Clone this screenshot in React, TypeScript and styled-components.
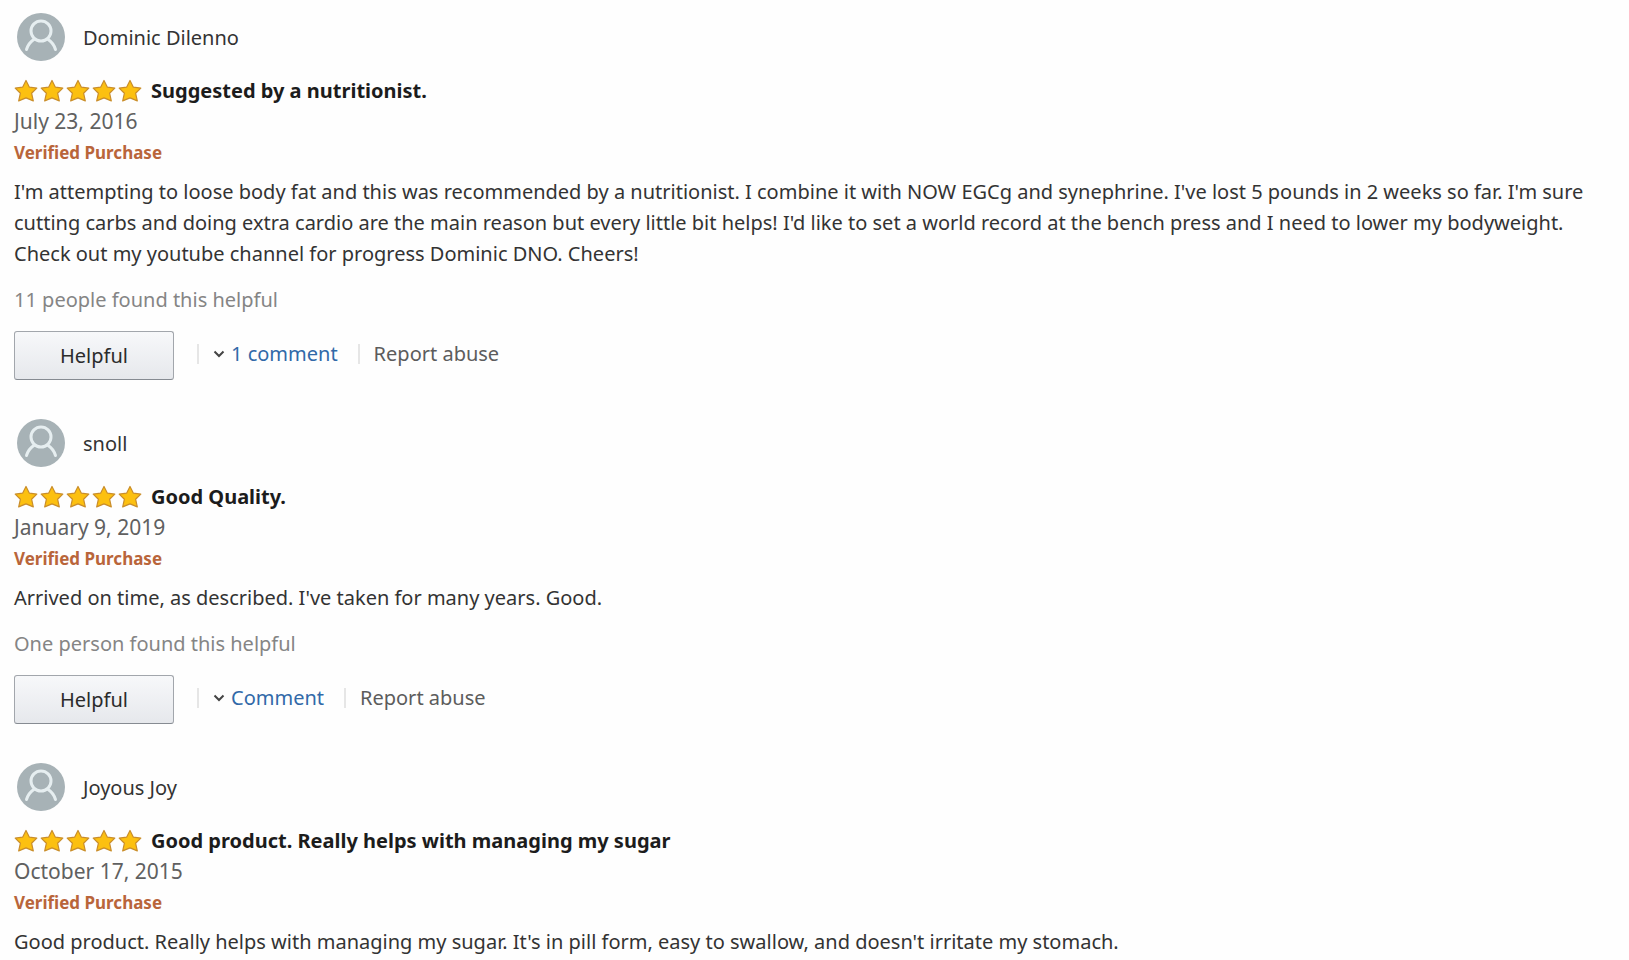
import React from 'react';
import styled, { createGlobalStyle } from 'styled-components';

const GlobalStyle = createGlobalStyle`
  * { box-sizing: border-box; }
  body {
    margin: 0;
    background: #fefefe;
    color: #333;
    font: 20px/31px "Noto Sans", "Open Sans", sans-serif;
  }
`;

const ReviewList = styled.main`
  display: flex;
  flex-direction: column;
  gap: 39px;
  padding: 13px 14px 0;
`;

const ReviewCard = styled.article`
  display: flex;
  flex-direction: column;
`;

const Profile = styled.header`
  display: flex;
  align-items: center;
  gap: 18px;
  padding-left: 3px;
  margin-bottom: 14px;
`;

const AvatarIcon = styled.svg`
  width: 48px;
  height: 48px;
  flex: none;
`;

const Name = styled.span`
  color: #333;
`;

const TitleRow = styled.div`
  display: flex;
  align-items: center;
  gap: 9px;
`;

const Rating = styled.span`
  display: flex;
  gap: 2px;
`;

const StarIcon = styled.svg`
  width: 24px;
  height: 24px;
`;

const Title = styled.h2`
  margin: 0;
  color: #1c1c1c;
  font-size: 20px;
  font-weight: 700;
`;

const ReviewDate = styled.time`
  color: #606060;
  font-size: 21px;
`;

const Verified = styled.span`
  color: #b9653a;
  font-size: 17px;
  font-weight: 700;
`;

const Body = styled.p`
  margin: 8px 0 15px;
`;

const HelpfulCount = styled.span`
  color: #858585;
  margin-bottom: 16px;
`;

const Actions = styled.footer`
  display: flex;
  align-items: center;
`;

const HelpfulButton = styled.button`
  width: 160px;
  height: 49px;
  padding: 0;
  border: 1px solid #a2a6ac;
  border-bottom-color: #868b92;
  border-radius: 3px;
  background: linear-gradient(#f7f8fa, #e6e8ec);
  color: #2b2b2b;
  font: inherit;
  cursor: pointer;
`;

const ActionLinks = styled.div`
  display: flex;
  align-items: center;
  padding-bottom: 4px;
`;

const Divider = styled.span<{ $before: number; $after: number }>`
  width: 2px;
  height: 20px;
  margin: 0 ${p => p.$after}px 0 ${p => p.$before}px;
  background: #e6e6e6;
`;

const CommentLink = styled.a`
  display: flex;
  align-items: center;
  gap: 6px;
  color: #3169a8;
  text-decoration: none;
`;

const ChevronIcon = styled.svg`
  width: 12px;
  height: 8px;
`;

const ReportLink = styled.a`
  color: #5c5c5c;
  text-decoration: none;
`;

function Avatar() {
  return (
    <AvatarIcon viewBox="0 0 48 48" aria-hidden="true">
      <circle cx="24" cy="24" r="24" fill="#a7b2b6" />
      <g fill="none" stroke="#e6eef0" strokeWidth="3" strokeLinecap="round">
        <circle cx="24" cy="18" r="10" />
        <path d="M9.500 36.500c1.500-5 4-8 8-10.500M38.500 36.500c-1.500-5-4-8-8-10.500" />
      </g>
    </AvatarIcon>
  );
}

function Stars() {
  return (
    <Rating role="img" aria-label="5 out of 5 stars">
      {[1, 2, 3, 4, 5].map(n => (
        <StarIcon key={n} viewBox="0 0 24 24" aria-hidden="true">
          <path
            d="M12 1.500l3.400 6.700 7.400.9-5.200 5.100 1.700 7.700-7.300-3-7.300 3 1.700-7.700L1.200 9.100l7.400-.9z"
            fill="#fcc010"
            stroke="#c98d2b"
            strokeWidth="1.200"
            strokeLinejoin="round"
          />
        </StarIcon>
      ))}
    </Rating>
  );
}

interface Review {
  name: string;
  title: string;
  date: string;
  body: string;
  helpful?: string;
  comment?: string;
}

const reviews: Review[] = [
  {
    name: 'Dominic Dilenno',
    title: 'Suggested by a nutritionist.',
    date: 'July 23, 2016',
    body:
      "I'm attempting to loose body fat and this was recommended by a nutritionist. I combine it with NOW EGCg and synephrine. I've lost 5 pounds in 2 weeks so far. I'm sure cutting carbs and doing extra cardio are the main reason but every little bit helps! I'd like to set a world record at the bench press and I need to lower my bodyweight. Check out my youtube channel for progress Dominic DNO. Cheers!",
    helpful: '11 people found this helpful',
    comment: '1 comment',
  },
  {
    name: 'snoll',
    title: 'Good Quality.',
    date: 'January 9, 2019',
    body: "Arrived on time, as described. I've taken for many years. Good.",
    helpful: 'One person found this helpful',
    comment: 'Comment',
  },
  {
    name: 'Joyous Joy',
    title: 'Good product. Really helps with managing my sugar',
    date: 'October 17, 2015',
    body:
      "Good product. Really helps with managing my sugar. It's in pill form, easy to swallow, and doesn't irritate my stomach.",
  },
];

export default function App() {
  return (
    <>
      <GlobalStyle />
      <ReviewList>
        {reviews.map(r => (
          <ReviewCard key={r.name}>
            <Profile>
              <Avatar />
              <Name>{r.name}</Name>
            </Profile>
            <TitleRow>
              <Stars />
              <Title>{r.title}</Title>
            </TitleRow>
            <ReviewDate>{r.date}</ReviewDate>
            <Verified>Verified Purchase</Verified>
            <Body>{r.body}</Body>
            {r.helpful && <HelpfulCount>{r.helpful}</HelpfulCount>}
            {r.comment && (
              <Actions>
                <HelpfulButton type="button">Helpful</HelpfulButton>
                <ActionLinks>
                  <Divider $before={23} $after={14} />
                  <CommentLink href="#comments">
                    <ChevronIcon viewBox="0 0 12 8" aria-hidden="true">
                      <path d="M1.500 1.500L6 6l4.500-4.500" fill="none" stroke="#444" strokeWidth="2" />
                    </ChevronIcon>
                    {r.comment}
                  </CommentLink>
                  <Divider $before={20} $after={14} />
                  <ReportLink href="#report">Report abuse</ReportLink>
                </ActionLinks>
              </Actions>
            )}
          </ReviewCard>
        ))}
      </ReviewList>
    </>
  );
}
